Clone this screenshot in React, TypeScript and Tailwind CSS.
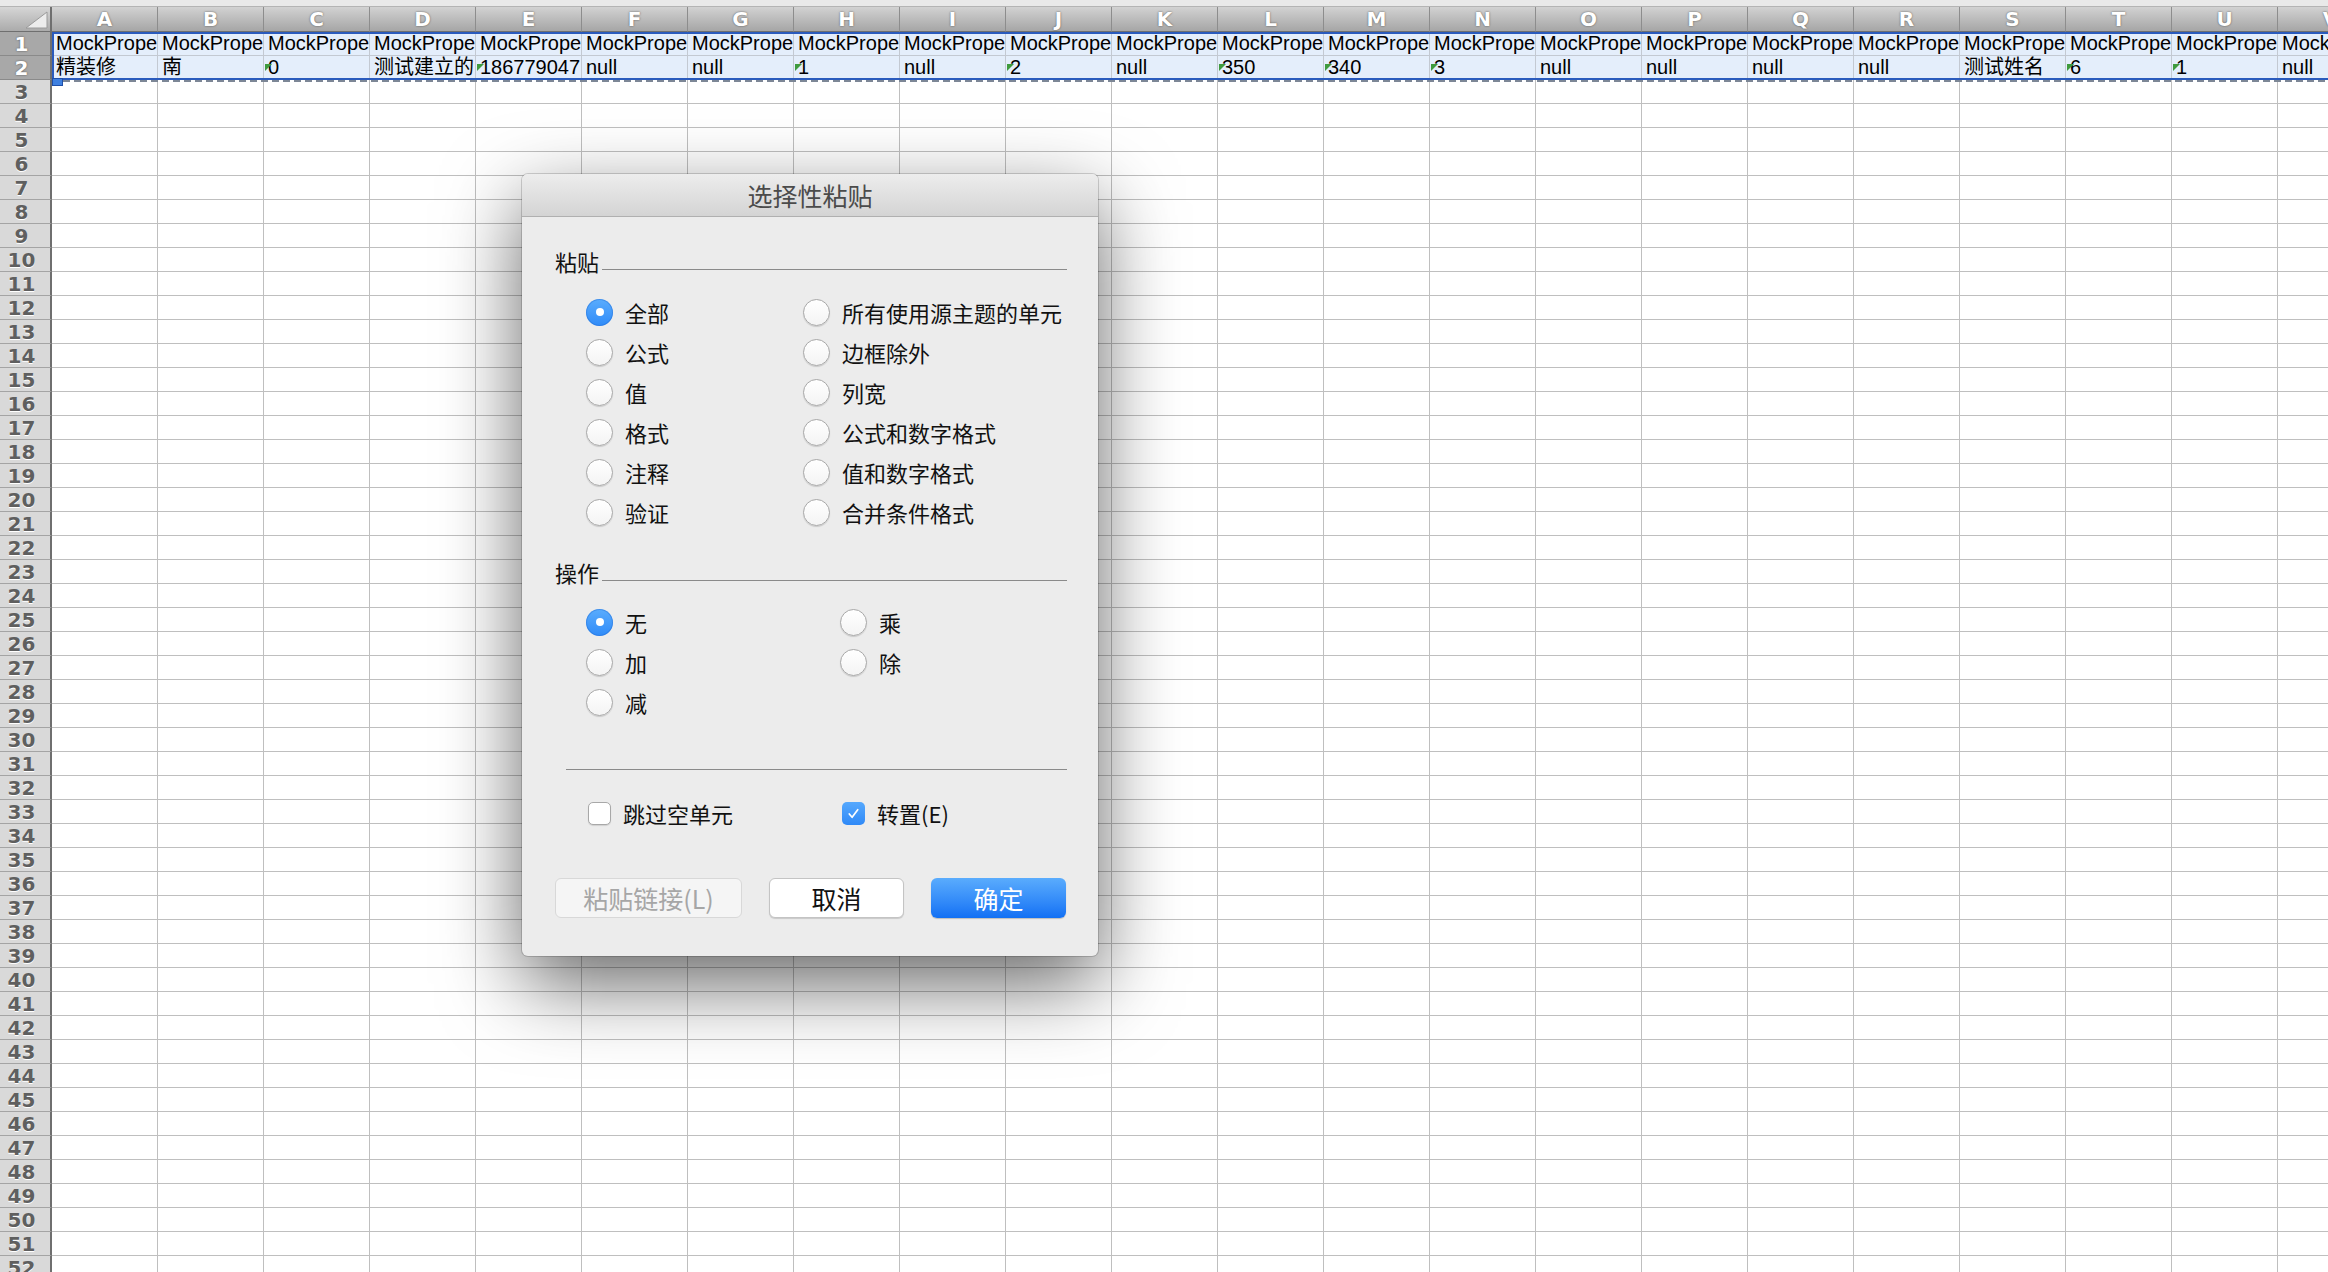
import React from "react";

const COLS = "ABCDEFGHIJKLMNOPQRSTUV".split("");
const ROWS = Array.from({ length: 52 }, (_, i) => i + 1);

type CellData = { v: string; tri?: boolean };

const row1: CellData[] = COLS.map(() => ({ v: "MockPrope" }));
const row2: CellData[] = [
  { v: "精装修" },
  { v: "南" },
  { v: "0", tri: true },
  { v: "测试建立的" },
  { v: "186779047", tri: true },
  { v: "null" },
  { v: "null" },
  { v: "1", tri: true },
  { v: "null" },
  { v: "2", tri: true },
  { v: "null" },
  { v: "350", tri: true },
  { v: "340", tri: true },
  { v: "3", tri: true },
  { v: "null" },
  { v: "null" },
  { v: "null" },
  { v: "null" },
  { v: "测试姓名" },
  { v: "6", tri: true },
  { v: "1", tri: true },
  { v: "null" },
];

function Tri() {
  return (
    <svg className="absolute left-[1px] top-[8px]" width="7" height="7" viewBox="0 0 7 7">
      <path d="M0 0H7L0 7Z" fill="#3f9b3d" />
    </svg>
  );
}

function Cell({ data, sel }: { data?: CellData; sel?: boolean }) {
  return (
    <div
      className={
        sel
          ? "relative h-full w-[106px] shrink-0 overflow-hidden whitespace-nowrap border-b border-r border-[#c3c9d2] bg-[#e4eefb] pl-[4px] text-[20px] leading-[23px] text-black"
          : "relative h-full w-[106px] shrink-0 overflow-hidden whitespace-nowrap border-b border-r border-[#bfbfbf] bg-white pl-[4px] text-[20px] leading-[23px] text-black"
      }
    >
      {data?.tri && <Tri />}
      {data?.v}
    </div>
  );
}

function RowHead({ n }: { n: number }) {
  const sel = n <= 2;
  return (
    <div
      className={
        sel
          ? "flex h-full w-[52px] shrink-0 items-center justify-center border-b border-r-2 border-b-[#8a8a8a] border-r-[#6f6f6f] bg-[#a8a8a8] pr-[7px] font-['DejaVu_Sans',sans-serif] text-[20px] font-bold text-white [text-shadow:0_0_2px_rgba(0,0,0,0.55)]"
          : "flex h-full w-[52px] shrink-0 items-center justify-center border-b border-r-2 border-b-[#a4a4a4] border-r-[#6f6f6f] bg-[#d9d9d9] pr-[7px] font-['DejaVu_Sans',sans-serif] text-[20px] font-bold text-[#5f5f5f] [text-shadow:0_1px_0_#ffffff]"
      }
    >
      {n}
    </div>
  );
}

function Radio({ on }: { on?: boolean }) {
  if (on) {
    return (
      <span className="flex h-[27px] w-[27px] shrink-0 items-center justify-center rounded-full bg-linear-to-b from-[#5aacfd] to-[#2f8bf8] shadow-[inset_0_0_0_1px_rgba(35,110,215,0.45)]">
        <span className="h-[8px] w-[8px] rounded-full bg-white" />
      </span>
    );
  }
  return (
    <span className="h-[27px] w-[27px] shrink-0 rounded-full border border-[#a8a8a8] bg-linear-to-b from-white to-[#f4f4f4] shadow-[0_1px_1px_rgba(0,0,0,0.15)]" />
  );
}

function Opt({ label, on }: { label: string; on?: boolean }) {
  return (
    <div className="flex h-[40px] items-center gap-[12px]">
      <Radio on={on} />
      <span className="text-[22px] leading-[26px] text-[#111]">{label}</span>
    </div>
  );
}

function Check({ label, on }: { label: string; on?: boolean }) {
  return (
    <div className="flex h-[40px] items-center gap-[12px] pl-[2px]">
      {on ? (
        <span className="flex h-[23px] w-[23px] items-center justify-center rounded-[5px] bg-linear-to-b from-[#55a8fd] to-[#2f89f7]">
          <svg width="15" height="15" viewBox="0 0 16 16" fill="none">
            <path d="M3.5 8.5l3 3.5 6-8" stroke="#fff" strokeWidth="1.8" strokeLinecap="round" strokeLinejoin="round" />
          </svg>
        </span>
      ) : (
        <span className="h-[23px] w-[23px] rounded-[5px] border border-[#a8a8a8] bg-white shadow-[0_1px_1px_rgba(0,0,0,0.12)]" />
      )}
      <span className="text-[22px] leading-[26px] text-[#111]">{label}</span>
    </div>
  );
}

function Section({ title }: { title: string }) {
  return (
    <div className="flex items-end">
      <span className="text-[22px] leading-[26px] text-[#111]">{title}</span>
      <span className="mb-[4px] ml-[3px] h-px flex-1 bg-[#8a8a8a]" />
    </div>
  );
}

function PasteSpecialDialog() {
  return (
    <div className="absolute left-[522px] top-[174px] flex h-[782px] w-[576px] flex-col rounded-[6px] bg-[#ececec] font-['Noto_Sans_CJK_SC','Liberation_Sans',sans-serif] shadow-[0_0_0_1px_rgba(0,0,0,0.16),0_28px_80px_rgba(0,0,0,0.6)]">
      <div className="flex h-[43px] shrink-0 items-center justify-center rounded-t-[6px] border-b border-[#b0b0b0] bg-linear-to-b from-[#ededed] to-[#d4d4d4] text-[25px] leading-[30px] text-[#4b4b4b]">
        选择性粘贴
      </div>
      <div className="flex flex-col pl-[33px] pr-[31px]">
        <div className="mt-[31px]">
          <Section title="粘贴" />
        </div>
        <div className="ml-[31px] mt-[18px] grid grid-cols-[217px_1fr]">
          <Opt label="全部" on />
          <Opt label="所有使用源主题的单元" />
          <Opt label="公式" />
          <Opt label="边框除外" />
          <Opt label="值" />
          <Opt label="列宽" />
          <Opt label="格式" />
          <Opt label="公式和数字格式" />
          <Opt label="注释" />
          <Opt label="值和数字格式" />
          <Opt label="验证" />
          <Opt label="合并条件格式" />
        </div>
        <div className="mt-[27px]">
          <Section title="操作" />
        </div>
        <div className="ml-[31px] mt-[17px] grid grid-cols-[254px_1fr]">
          <Opt label="无" on />
          <Opt label="乘" />
          <Opt label="加" />
          <Opt label="除" />
          <Opt label="减" />
        </div>
        <div className="ml-[11px] mt-[47px] h-px bg-[#8a8a8a]" />
        <div className="ml-[31px] mt-[23px] grid grid-cols-[254px_1fr]">
          <Check label="跳过空单元" />
          <Check label="转置(E)" on />
        </div>
        <div className="mt-[45px] flex gap-[27px]">
          <button className="h-[40px] w-[187px] rounded-[6px] border border-[#d8d8d8] bg-[#f5f5f5] text-[25px] leading-[30px] text-[#a6a6a6]">
            粘贴链接(L)
          </button>
          <button className="h-[40px] w-[135px] rounded-[6px] border border-[#c4c4c4] bg-white text-[25px] leading-[30px] text-[#111] shadow-[0_1px_1px_rgba(0,0,0,0.15)]">
            取消
          </button>
          <button className="h-[40px] w-[135px] rounded-[6px] bg-linear-to-b from-[#5aacfd] to-[#1170f4] text-[25px] leading-[30px] text-white shadow-[0_1px_1px_rgba(0,0,0,0.2)]">
            确定
          </button>
        </div>
      </div>
    </div>
  );
}

export default function App() {
  return (
    <div className="relative h-screen w-screen overflow-hidden bg-white font-['Liberation_Sans','Noto_Sans_CJK_SC',sans-serif]">
      {/* top strip */}
      <div className="h-[7px] border-b border-[#b4b4b4] bg-[#e9e9e9]" />

      {/* column headers */}
      <div className="flex h-[25px]">
        <div className="relative w-[52px] shrink-0 border-b border-r-2 border-b-[#6f6f6f] border-r-[#6f6f6f] bg-linear-to-b from-[#d6d6d6] to-[#ababab]">
          <svg className="absolute left-0 top-0" width="50" height="24" viewBox="0 0 50 24">
            <path d="M26 21H47V5Z" fill="#ececec" stroke="#9a9a9a" strokeWidth="1" />
          </svg>
        </div>
        {COLS.map((c) => (
          <div
            key={c}
            className="flex w-[106px] shrink-0 items-center justify-center border-b border-r border-b-[#6f6f6f] border-r-[#8d8d8d] bg-linear-to-b from-[#d2d2d2] to-[#a6a6a6] font-['DejaVu_Sans',sans-serif] text-[20px] font-bold leading-[25px] text-white [text-shadow:0_0_2px_rgba(0,0,0,0.6)]"
          >
            {c}
          </div>
        ))}
      </div>

      {/* rows */}
      {ROWS.map((n) => (
        <div key={n} className="flex h-[24px]">
          <RowHead n={n} />
          {COLS.map((c, i) => (
            <Cell
              key={c}
              sel={n <= 2}
              data={n === 1 ? row1[i] : n === 2 ? row2[i] : undefined}
            />
          ))}
        </div>
      ))}

      {/* selection + copy marquee */}
      <div className="pointer-events-none absolute left-[52px] top-[32px] h-[48px] w-[2400px] border-2 border-[#2a5bbd]" />
      <div className="pointer-events-none absolute left-[52px] top-[80px] h-[2px] w-[2400px] bg-[repeating-linear-gradient(90deg,#7d8796_0_7px,transparent_7px_11px)]" />
      <div className="absolute left-[52px] top-[78px] h-[8px] w-[11px] border border-[#1f4fa8] bg-[#3e80e0]" />

      <PasteSpecialDialog />
    </div>
  );
}
